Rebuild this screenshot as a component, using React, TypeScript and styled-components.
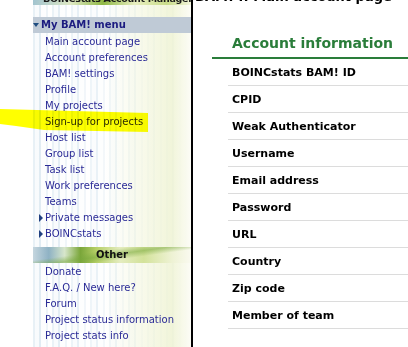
import React from "react"
import styled, { createGlobalStyle } from "styled-components"

const GlobalStyle = createGlobalStyle`
  html, body {
    margin: 0;
    padding: 0;
    background: #fff;
    overflow: hidden;
  }
  body {
    font-family: "DejaVu Sans", Verdana, sans-serif;
  }
`

const bamMenu = [
  "Main account page",
  "Account preferences",
  "BAM! settings",
  "Profile",
  "My projects",
  "Sign-up for projects",
  "Host list",
  "Group list",
  "Task list",
  "Work preferences",
  "Teams"
]

const folded = ["Private messages", "BOINCstats"]

const otherMenu = [
  "Donate",
  "F.A.Q. / New here?",
  "Forum",
  "Project status information",
  "Project stats info"
]

const fields = [
  "BOINCstats BAM! ID",
  "CPID",
  "Weak Authenticator",
  "Username",
  "Email address",
  "Password",
  "URL",
  "Country",
  "Zip code",
  "Member of team"
]

export default function App() {
  return (
    <>
      <GlobalStyle />
      <Page>
        <Gutter />
        <Sidebar>
          <SideTitle>BOINCstats Account Manager</SideTitle>
          <MenuHeader>
            <DownArrow />
            My BAM! menu
          </MenuHeader>
          <MenuList>
            {bamMenu.map(item => (
              <MenuItem key={item}>{item}</MenuItem>
            ))}
            {folded.map(item => (
              <MenuItem key={item} $folded>
                <RightArrow />
                {item}
              </MenuItem>
            ))}
          </MenuList>
          <Band>Other</Band>
          <MenuList>
            {otherMenu.map(item => (
              <MenuItem key={item}>{item}</MenuItem>
            ))}
          </MenuList>
        </Sidebar>
        <Main>
          <PageTitle>BAM! :: Main account page</PageTitle>
          <Panel>
            <Heading>Account information</Heading>
            <InfoList>
              {fields.map(f => (
                <InfoRow key={f}>{f}</InfoRow>
              ))}
            </InfoList>
          </Panel>
        </Main>
        <Marker viewBox="0 0 150 30" aria-hidden>
          <polygon points="0,0 148,4 148,23 44,21 16,17 0,15" />
        </Marker>
      </Page>
    </>
  )
}

// Styled
const Page = styled.div`
  position: relative;
  display: flex;
  margin-top: -10px;
  width: 408px;
  height: 357px;
  overflow: hidden;
`

const Gutter = styled.div`
  width: 33px;
  flex-shrink: 0;
`

const Sidebar = styled.div`
  width: 158px;
  flex-shrink: 0;
  border-right: 2px solid #000;
  background:
    linear-gradient(
      90deg,
      rgba(255, 255, 255, 0.2) 0%,
      rgba(255, 255, 255, 0.5) 45%,
      rgba(246, 248, 228, 0.85) 72%,
      rgba(240, 244, 214, 0.9) 88%,
      rgba(252, 252, 246, 1) 100%
    ),
    repeating-linear-gradient(
      90deg,
      #e2edf4 0 2px,
      #f7fafc 2px 6px,
      #d8e6f0 6px 8px,
      #fcfdfe 8px 13px,
      #e8f0f6 13px 15px,
      #ffffff 15px 19px
    );
`

const SideTitle = styled.div`
  box-sizing: border-box;
  height: 15px;
  padding: 3px 0 0 10px;
  font-size: 9.5px;
  font-weight: bold;
  letter-spacing: -0.3px;
  line-height: 11px;
  color: #1a1a1a;
  white-space: nowrap;
  overflow: hidden;
  background: linear-gradient(
    100deg,
    #9fc2d0 0%,
    #dfe9c4 25%,
    #8fb845 45%,
    #e8eec0 65%,
    #c9dc8a 85%,
    #f3f5dd 100%
  );
  margin-bottom: 12px;
`

const MenuHeader = styled.div`
  height: 16px;
  display: flex;
  align-items: center;
  gap: 2px;
  background: #bfcad6;
  color: #1c1c80;
  font-size: 10px;
  font-weight: bold;
  line-height: 16px;
`

const DownArrow = styled.span`
  width: 0;
  height: 0;
  border-left: 3px solid transparent;
  border-right: 3px solid transparent;
  border-top: 4px solid #1f4d80;
`

const RightArrow = styled.span`
  width: 0;
  height: 0;
  border-top: 4px solid transparent;
  border-bottom: 4px solid transparent;
  border-left: 4px solid #1f3f80;
  margin-right: 2px;
`

const MenuList = styled.div`
  display: flex;
  flex-direction: column;
  padding-top: 1px;
`

const MenuItem = styled.div<{ $folded?: boolean }>`
  height: 16px;
  display: flex;
  align-items: center;
  padding-left: ${p => (p.$folded ? "6px" : "12px")};
  font-size: 10px;
  line-height: 16px;
  color: #2a2a96;
  white-space: nowrap;
`

const Band = styled.div`
  margin-top: 5px;
  height: 16px;
  text-align: center;
  font-size: 10px;
  font-weight: bold;
  line-height: 16px;
  color: #111;
  background:
    linear-gradient(
      172deg,
      rgba(255, 255, 255, 0) 35%,
      rgba(120, 168, 60, 0.55) 50%,
      rgba(255, 255, 255, 0) 65%
    ),
    linear-gradient(
      90deg,
      #c5d6df 0%,
      #8fb2c4 10%,
      #d7e6cb 20%,
      #7aa63a 30%,
      #b5cf66 40%,
      #e4ecbf 55%,
      #d3e29a 70%,
      #eef2d4 88%,
      #fafaf0 100%
    );
`

const Main = styled.div`
  flex: 1;
  min-width: 0;
`

const PageTitle = styled.div`
  height: 15px;
  padding-left: 2px;
  font-size: 13px;
  font-weight: bold;
  line-height: 14px;
  color: #000;
  white-space: nowrap;
  overflow: hidden;
`

const Panel = styled.div`
  margin-left: 19px;
`

const Heading = styled.h2`
  margin: 0;
  padding: 28px 0 4px 20px;
  font-size: 14px;
  line-height: 20px;
  font-weight: bold;
  color: #2a7d3a;
  border-bottom: 2px solid #2a7d3a;
  white-space: nowrap;
`

const InfoList = styled.div`
  margin-left: 16px;
  display: flex;
  flex-direction: column;
`

const InfoRow = styled.div`
  height: 26px;
  display: flex;
  align-items: center;
  padding-left: 4px;
  border-bottom: 1px solid #dcdcdc;
  font-size: 11px;
  font-weight: bold;
  color: #000;
  white-space: nowrap;
`

const Marker = styled.svg`
  position: absolute;
  left: 0;
  top: 119px;
  width: 150px;
  height: 30px;
  fill: #ffff00;
  mix-blend-mode: multiply;
  pointer-events: none;
`
